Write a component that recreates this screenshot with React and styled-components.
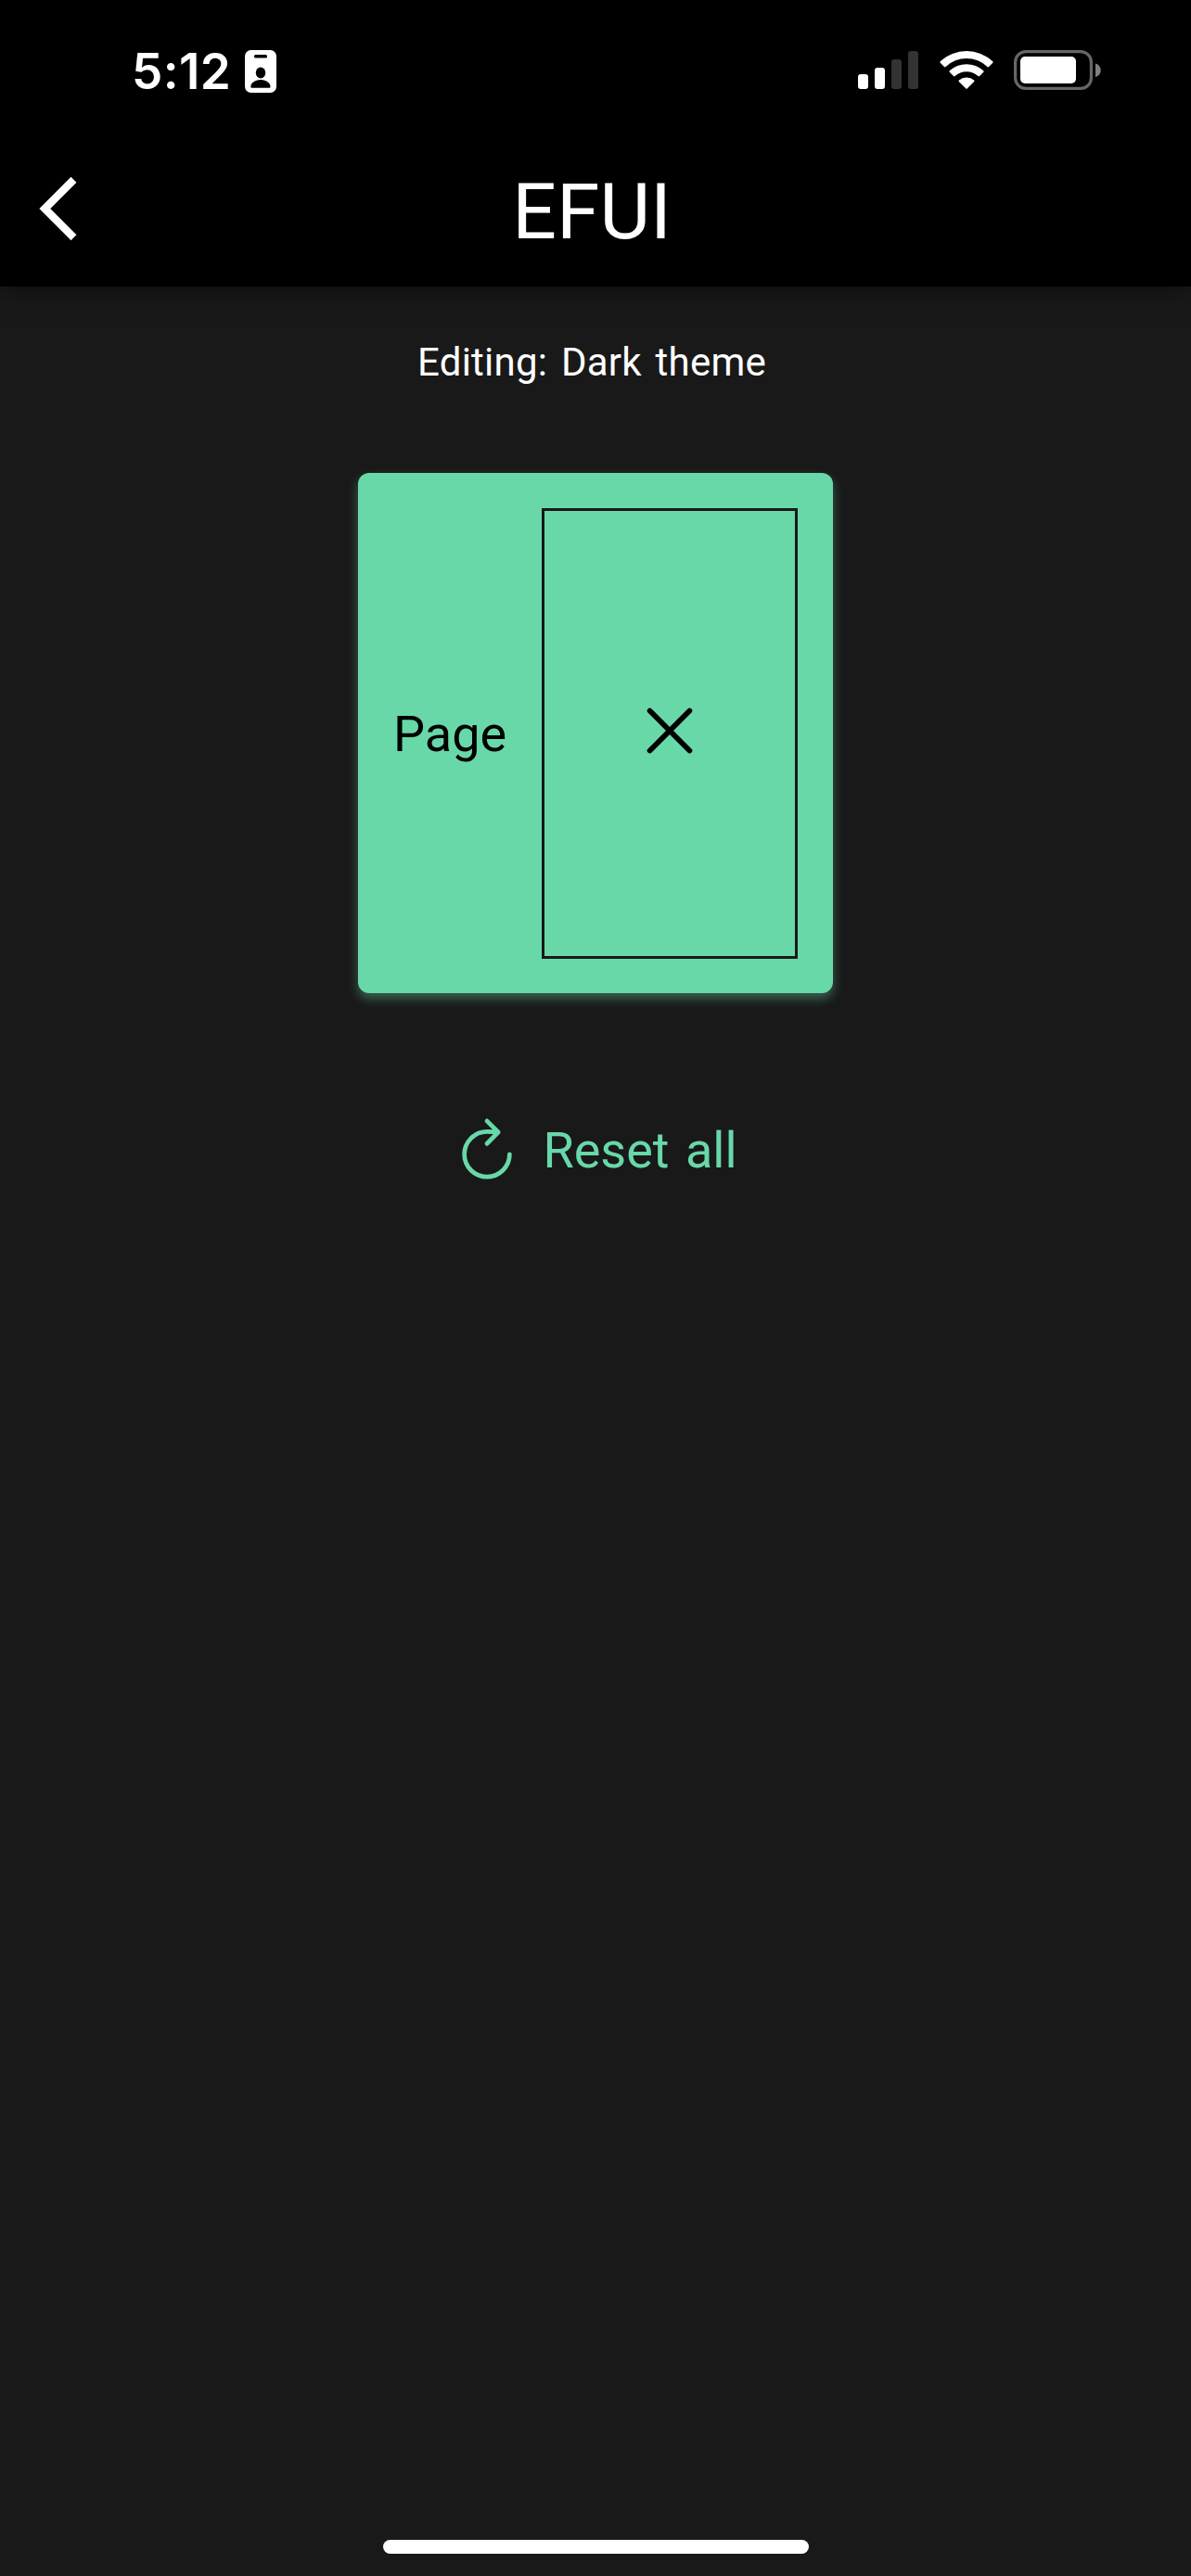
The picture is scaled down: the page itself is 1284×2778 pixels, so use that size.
import React from 'react';
import styled, { createGlobalStyle } from 'styled-components';

const mint = '#68d8a9';
const ink = '#191919';

const GlobalStyle = createGlobalStyle`
  * { box-sizing: border-box; }
  body { margin: 0; background: ${ink}; }
`;

const Screen = styled.div`
  width: 1284px;
  height: 2778px;
  display: flex;
  flex-direction: column;
  overflow: hidden;
  background: ${ink};
  color: #fff;
  font-family: Roboto, 'Liberation Sans', sans-serif;
`;

const Header = styled.header`
  flex: none;
  height: 309px;
  background: #000;
  box-shadow: 0 2px 24px rgba(0, 0, 0, 0.5);
`;

const StatusBar = styled.div`
  height: 141px;
  display: flex;
  justify-content: space-between;
  align-items: flex-start;
  padding: 54px 97px 0 142px;
`;

const StatusGroup = styled.div`
  display: flex;
  align-items: flex-start;
  gap: ${(p) => p.$gap}px;
`;

const Clock = styled.span`
  width: 108px;
  margin-top: -3px;
  font: 600 53px/52px Inter, sans-serif;
  letter-spacing: 0.4px;
  white-space: nowrap;
`;

const Icon = styled.svg`
  display: block;
  flex: none;
`;

const NavBar = styled.div`
  height: 168px;
  display: grid;
  grid-template-columns: 112px 1fr 120px;
  align-items: center;
`;

const BackButton = styled.button`
  display: flex;
  margin: 0;
  padding: 0 0 0 42px;
  border: 0;
  background: none;
  color: #fff;
`;

const Title = styled.h1`
  margin: 0;
  padding-top: 7px;
  font-size: 84px;
  font-weight: 400;
  line-height: 98px;
  text-align: center;
`;

const Content = styled.main`
  flex: 1;
  display: flex;
  flex-direction: column;
  align-items: center;
`;

const Caption = styled.p`
  margin: 57px 0 0;
  padding-right: 8px;
  font-size: 42px;
  line-height: 49px;
  letter-spacing: 0.25px;
  word-spacing: 4px;
`;

const Card = styled.section`
  display: flex;
  align-items: center;
  gap: 38px;
  width: 512px;
  height: 561px;
  margin-top: 95px;
  padding: 37.5px 38px;
  border-radius: 12px;
  background: ${mint};
  color: #000;
  box-shadow: 0 6px 12px rgba(104, 216, 169, 0.4);
`;

const CardLabel = styled.span`
  flex: none;
  padding-top: 3px;
  font-size: 54px;
  line-height: 64px;
`;

const Slot = styled.div`
  flex: 1;
  align-self: stretch;
  display: flex;
  align-items: center;
  justify-content: center;
  padding-bottom: 6px;
  border: 3px solid ${ink};
`;

const ResetButton = styled.button`
  display: flex;
  align-items: center;
  gap: 21px;
  margin: 129px 0 0;
  padding: 0 3px 0 0;
  border: 0;
  background: none;
  color: ${mint};
  font: 400 54px/64px Roboto, sans-serif;
  word-spacing: 4px;
`;

const ResetLabel = styled.span`
  padding-top: 3px;
`;

const Footer = styled.footer`
  flex: none;
  display: flex;
  justify-content: center;
  height: 39px;
`;

const HomeIndicator = styled.div`
  width: 459px;
  height: 15px;
  border-radius: 8px;
  background: #fff;
`;

const BadgeIcon = () => (
  <Icon width="34" height="46" viewBox="0 0 34 46">
    <rect width="34" height="46" rx="6.5" fill="#fff" />
    <rect x="10" y="5" width="14" height="3.6" rx="1.6" />
    <ellipse cx="17" cy="24.6" rx="5.2" ry="6" />
    <path d="M6.3 39.3C6.3 36 10.5 32 17 32s10.500 4 10.500 7.300c0 1-.5 1.500-1.500 1.500H7.800c-1 0-1.500-.5-1.500-1.500Z" />
  </Icon>
);

const SignalIcon = () => (
  <Icon width="65" height="42" viewBox="0 0 65 42">
    <rect y="26" width="11" height="16" rx="3" fill="#fff" />
    <rect x="18" y="19" width="11" height="23" rx="3" fill="#fff" />
    <rect x="36" y="10" width="11" height="32" rx="3" fill="#333" />
    <rect x="54" y="1" width="11" height="41" rx="3" fill="#333" />
  </Icon>
);

const WifiIcon = () => (
  <Icon width="58" height="42" viewBox="0 0 58 42" fill="#fff">
    <path d="M.7 12.300A41 41 0 0 1 57.300 12.300Q58 13 57.300 13.700L53 18Q52.200 18.800 51.400 18A32.500 32.500 0 0 0 6.600 18Q5.800 18.800 5 18L.7 13.700Q0 13 .7 12.300Z" />
    <path d="M10.700 22.300A27 27 0 0 1 47.300 22.300Q48 23 47.300 23.700L43 28Q42.200 28.800 41.400 28A18.500 18.500 0 0 0 16.600 28Q15.800 28.800 15 28L10.700 23.700Q10 23 10.700 22.300Z" />
    <path d="M20.900 32.400A13 13 0 0 1 37.100 32.400Q38 33.200 37.200 34L29.700 41.400Q29 42 28.300 41.400L20.800 34Q20 33.200 20.900 32.400Z" />
  </Icon>
);

const BatteryIcon = () => (
  <Icon width="94" height="43" viewBox="0 0 94 43">
    <rect x="1.600" y="1.600" width="81.800" height="39.800" rx="11.500" fill="none" stroke="#666" strokeWidth="3.200" />
    <rect x="7" y="7" width="60" height="29" rx="5" fill="#fff" />
    <path d="M88 14.500C91.500 15.500 93.700 18.300 93.700 21.800S91.500 28 88 29Z" fill="#808080" />
  </Icon>
);

const BackIcon = () => (
  <Icon width="42" height="70" viewBox="0 0 42 70" fill="none" stroke="currentColor" strokeWidth="8.400">
    <path d="M37.500 3.800 6.300 35 37.500 66.200" />
  </Icon>
);

const CloseIcon = () => (
  <Icon width="98" height="98" viewBox="0 0 512 512" fill="none" stroke="currentColor" strokeWidth="30" strokeLinecap="round">
    <path d="M368 368 144 144M368 144 144 368" />
  </Icon>
);

const ResetIcon = () => (
  <Icon width="78" height="78" viewBox="0 0 512 512" fill="none" stroke="currentColor" strokeWidth="31" strokeLinecap="round">
    <path d="M320 146s24.360-12-64-12a160 160 0 1 0 160 160" />
    <path d="m256 58 80 80-80 80" strokeLinejoin="round" />
  </Icon>
);

export default function App() {
  return (
    <>
      <GlobalStyle />
      <Screen>
        <Header>
          <StatusBar>
            <StatusGroup $gap={14}>
              <Clock>5:12</Clock>
              <BadgeIcon />
            </StatusGroup>
            <StatusGroup $gap={22.5}>
              <SignalIcon />
              <WifiIcon />
              <BatteryIcon />
            </StatusGroup>
          </StatusBar>
          <NavBar>
            <BackButton aria-label="Back">
              <BackIcon />
            </BackButton>
            <Title>EFUI</Title>
          </NavBar>
        </Header>
        <Content>
          <Caption>Editing: Dark theme</Caption>
          <Card>
            <CardLabel>Page</CardLabel>
            <Slot>
              <CloseIcon />
            </Slot>
          </Card>
          <ResetButton>
            <ResetIcon />
            <ResetLabel>Reset all</ResetLabel>
          </ResetButton>
        </Content>
        <Footer>
          <HomeIndicator />
        </Footer>
      </Screen>
    </>
  );
}
